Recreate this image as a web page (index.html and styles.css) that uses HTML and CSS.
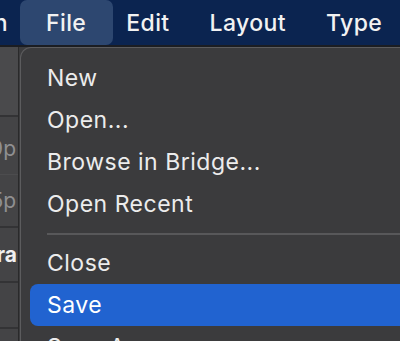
FILE: index.html
```html
<!DOCTYPE html>
<html lang="en">
<head>
  <meta charset="UTF-8">
  <title>File menu</title>
  <link rel="stylesheet" href="styles.css">
</head>
<body>
  <div class="menubar">
    <span class="bar-item cut">InDesign</span>
    <span class="bar-item active">File</span>
    <span class="bar-item">Edit</span>
    <span class="bar-item">Layout</span>
    <span class="bar-item">Type</span>
    <span class="bar-item">Object</span>
  </div>

  <div class="workspace">
    <div class="panel">
      <div class="panel-row top"></div>
      <div class="panel-row field first">9p</div>
      <div class="panel-row field">5p</div>
      <div class="panel-row label">Para</div>
      <div class="panel-row"></div>
    </div>

    <div class="menu">
      <div class="menu-item">New</div>
      <div class="menu-item">Open...</div>
      <div class="menu-item">Browse in Bridge...</div>
      <div class="menu-item">Open Recent</div>
      <div class="separator"></div>
      <div class="menu-item">Close</div>
      <div class="menu-item selected">Save</div>
      <div class="menu-item">Save As...</div>
    </div>
  </div>
</body>
</html>
```

FILE: styles.css
```css
body {
  margin: 0;
  width: 400px;
  height: 341px;
  overflow: hidden;
  background: #3c3c3e;
  font-family: 'Inter', 'Liberation Sans', sans-serif;
  color: #ececec;
}

.menubar {
  display: flex;
  height: 45px;
  align-items: center;
  background: #0b2450;
  border-bottom: 2px solid #1b1d22;
  white-space: nowrap;
  font-size: 23px;
  font-weight: 500;
  letter-spacing: 0.4px;
  overflow: hidden;
}

.bar-item {
  display: flex;
  align-items: center;
  height: 45px;
  padding: 0 20px;
  color: #f2f2f2;
  flex-shrink: 0;
}

.bar-item.cut {
  width: 8px;
  padding: 0;
  margin-right: 12px;
  justify-content: flex-end;
  overflow: hidden;
}

.bar-item.active {
  padding: 0 27px 0 26px;
  margin-right: -7px;
  background: #2d4770;
  border-radius: 7px;
}

.workspace {
  display: flex;
  height: 294px;
}

.panel {
  width: 18px;
  flex-shrink: 0;
  background: #444446;
  border-right: 1px solid #2a2a2b;
  overflow: hidden;
}

.panel-row {
  height: 44px;
  border-bottom: 2px solid #333335;
  display: flex;
  align-items: center;
  justify-content: flex-end;
  padding-right: 2px;
  font-size: 21px;
  white-space: nowrap;
}

.panel-row.top {
  height: 68px;
  background: #4a4a4c;
}

.panel-row.field {
  color: #8f8f91;
  height: 51px;
}

.panel-row.field.first {
  height: 58px;
  padding-top: 6px;
  box-sizing: border-box;
  border-bottom: 1px solid #4c4c4e;
}

.panel-row.label {
  height: 53px;
  font-weight: 700;
  color: #f0f0f0;
  padding-right: 1px;
}

.menu {
  flex: 1;
  margin-left: 1px;
  padding-top: 9px;
  background: #3b3b3d;
  border-top: 1px solid #5c5c5e;
  border-left: 1px solid #5c5c5e;
  border-top-left-radius: 11px;
  overflow: hidden;
}

.menu-item {
  height: 42px;
  margin-left: 9px;
  padding-left: 17px;
  display: flex;
  align-items: center;
  font-size: 23px;
  letter-spacing: 0.5px;
  white-space: nowrap;
  border-radius: 8px 0 0 8px;
}

.menu-item.selected {
  background: #2163d0;
  color: #ffffff;
}

.separator {
  height: 17px;
  margin-left: 26px;
  display: flex;
  align-items: center;
}

.separator::after {
  content: '';
  flex: 1;
  height: 2px;
  background: #58585a;
}
```
